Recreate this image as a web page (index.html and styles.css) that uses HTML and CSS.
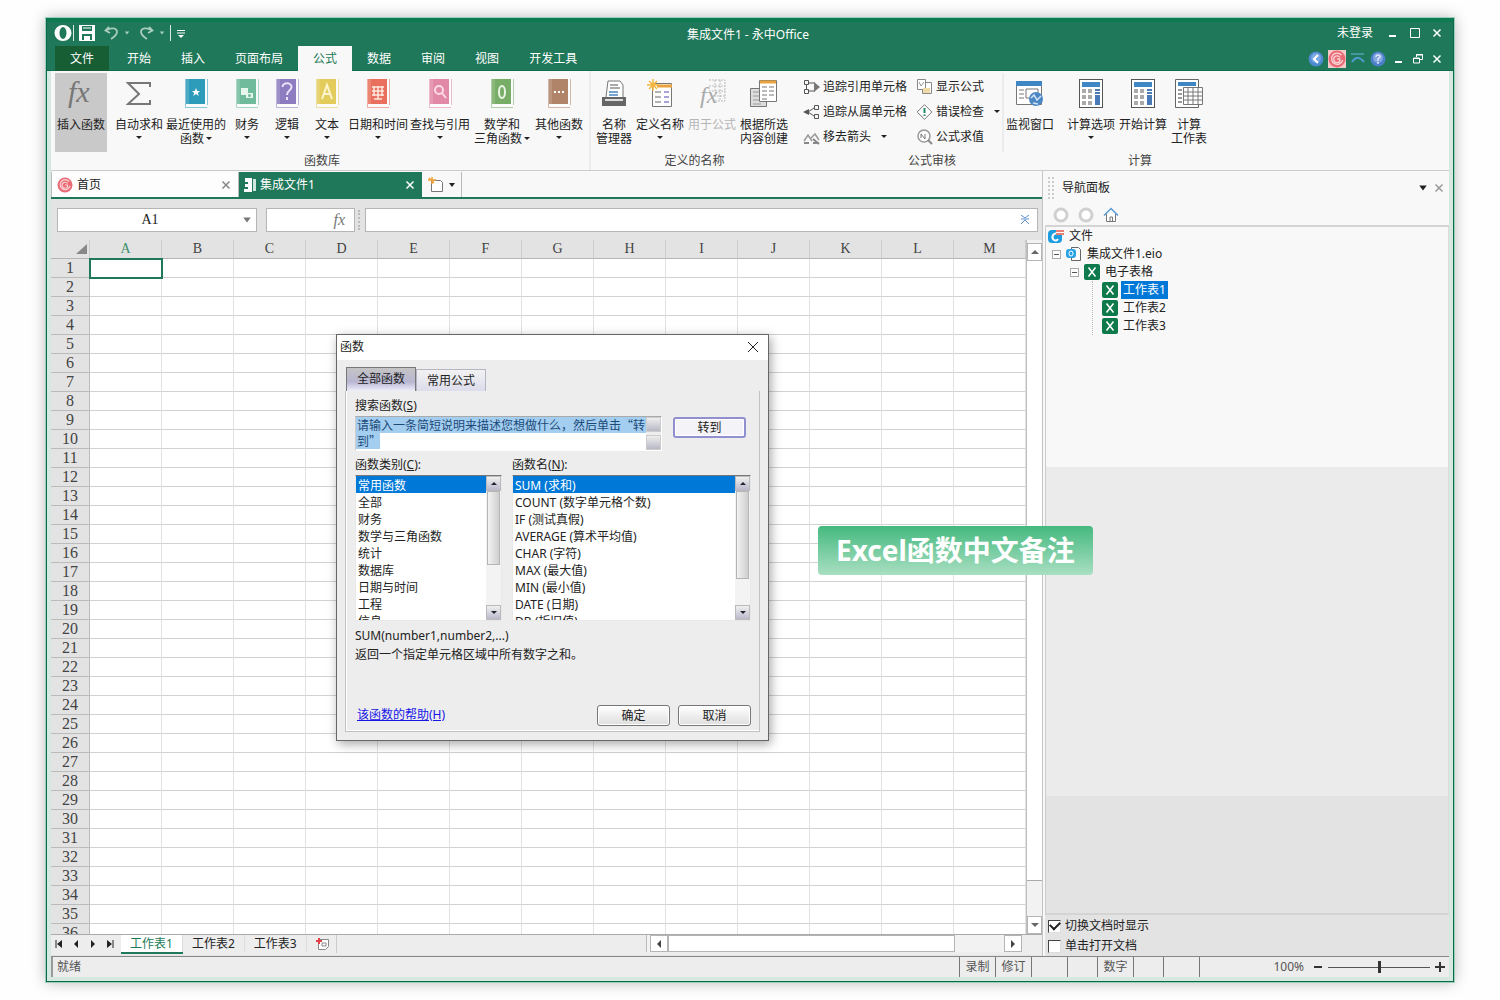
FILE: index.html
```html
<!DOCTYPE html>
<html lang="zh-CN">
<head>
    <meta charset="UTF-8">
    <meta name="viewport" content="width=device-width, initial-scale=1.0">
    <title>集成文件1 - 永中Office</title>
    <link rel="stylesheet" href="styles.css">
</head>
<body>
    <svg class="sprite" aria-hidden="true">
        <symbol id="book" viewBox="0 0 26 30">
            <rect x="3" y="0" width="19" height="25" fill="currentColor"/>
            <path d="M2.500 0v28.500H24M24.500 0v26" fill="none" stroke="currentColor" stroke-opacity=".55"/>
            <path d="M3 25.500h20v2H3z" fill="#fff"/>
            <path d="M23 0v27" stroke="#fff"/>
            <rect x="3" y="0" width="3" height="25" fill="#fff" opacity=".15"/>
        </symbol>
        <symbol id="cross" viewBox="0 0 10 10">
            <path d="M1.500 1.500l7 7M8.500 1.500l-7 7" fill="none" stroke="currentColor" stroke-width="1.500"/>
        </symbol>
        <symbol id="minus" viewBox="0 0 10 10"><path d="M1 8h7" stroke="currentColor" stroke-width="2"/></symbol>
        <symbol id="swirl" viewBox="0 0 16 16">
            <circle cx="8" cy="8" r="7.500" fill="#e96b75"/>
            <path d="M12 4.500A5 5 0 1 0 13 9M10.500 6.500A3 3 0 1 0 10.500 10V8H8" fill="none" stroke="#fbd5d8" stroke-width="1.200"/>
        </symbol>
        <symbol id="sheet" viewBox="0 0 16 16">
            <rect width="16" height="16" rx="2" fill="#0e7a4c"/>
            <path d="M4.500 3.500l7 9M11.500 3.500l-7 9" stroke="#fff" stroke-width="1.500"/>
        </symbol>
        <symbol id="calc" viewBox="0 0 26 30">
            <rect x="1.500" y=".5" width="23" height="28" fill="#fff" stroke="#555"/>
            <path d="M4 3h18v5H4z" fill="#3f87c4"/>
            <path d="M4 10h4v4H4zM10 10h4v4h-4zM4 16h4v4H4zM10 16h4v4h-4zM4 22h4v4H4zM10 22h4v4h-4z" fill="#aaa"/>
            <path d="M17 10h5v2h-5zM17 13h5v2h-5zM17 16h5v10h-5z" fill="#4a79b8"/>
        </symbol>
        <symbol id="chevron" viewBox="0 0 8 8"><path d="M1 2h6L4 6z" fill="currentColor"/></symbol>
    </svg>

    <div class="window">
        <header class="titlebar">
            <div class="titlebar__top">
                <div class="quick">
                    <svg width="18" height="16" viewBox="0 0 18 16"><path fill-rule="evenodd" fill="#fff" d="M9 0a8.500 8 0 1 0 0 16A8.500 8 0 1 0 9 0zM9 2a3.500 6 0 1 1 0 12A3.500 6 0 1 1 9 2z"/></svg>
                    <span class="quick__line"></span>
                    <button class="icon-button" aria-label="保存"><svg width="16" height="16" viewBox="0 0 16 16"><path fill="#fff" fill-rule="evenodd" d="M0 0h16v16H0zM3 1v5h10V1zM3 9v6h2v-4h6v4h2V9z"/><path d="M4 3h8M7 12v3" stroke="#fff"/></svg></button>
                    <button class="icon-button quick__undo" aria-label="撤销"><svg width="15" height="14" viewBox="0 0 15 14"><path d="M5 1L1.500 4.500 6 7M2 4.500C7 1 13 2 13 6c0 3-3 5-6 7" fill="none" stroke="#a9cdbd" stroke-width="1.800"/></svg></button>
                    <svg class="quick__arrow" width="6" height="6"><use href="#chevron"/></svg>
                    <button class="icon-button" aria-label="重做"><svg width="15" height="14" viewBox="0 0 15 14"><path d="M10 1l3.500 3.500L9 7M13 4.500C8 1 2 2 2 6c0 3 3 5 6 7" fill="none" stroke="#a9cdbd" stroke-width="1.800"/></svg></button>
                    <svg class="quick__arrow" width="6" height="6"><use href="#chevron"/></svg>
                    <span class="quick__line"></span>
                    <svg width="9" height="9" viewBox="0 0 9 9"><path d="M1 1.500h8M1 4h8" stroke="#fff"/><path d="M2 6h6L5 9z" fill="#fff"/></svg>
                </div>
                <h1 class="titlebar__name">集成文件1 - 永中Office</h1>
                <div class="controls">
                    <span class="controls__login">未登录</span>
                    <button class="icon-button" aria-label="最小化"><svg width="10" height="10"><use href="#minus"/></svg></button>
                    <button class="icon-button" aria-label="最大化"><svg width="12" height="12" viewBox="0 0 12 12"><path d="M1.500 1.500h9v9h-9z" fill="none" stroke="#fff"/></svg></button>
                    <button class="icon-button" aria-label="关闭"><svg width="10" height="10"><use href="#cross"/></svg></button>
                </div>
            </div>
            <div class="titlebar__bottom">
                <nav class="menu">
                    <a class="menu__item menu__item_file" href="#">文件</a>
                    <a class="menu__item" href="#">开始</a>
                    <a class="menu__item" href="#">插入</a>
                    <a class="menu__item" href="#">页面布局</a>
                    <a class="menu__item menu__item_active" href="#">公式</a>
                    <a class="menu__item" href="#">数据</a>
                    <a class="menu__item" href="#">审阅</a>
                    <a class="menu__item" href="#">视图</a>
                    <a class="menu__item" href="#">开发工具</a>
                </nav>
                <div class="controls controls_small">
                    <svg width="16" height="16" viewBox="0 0 16 16"><circle cx="8" cy="8" r="7.500" fill="#4d8ad0"/><circle cx="8" cy="7" r="5" fill="#79a8e2"/><path d="M10 4L6 8l4 4" fill="none" stroke="#fff" stroke-width="2"/></svg>
                    <span class="controls__home"><svg width="18" height="18"><use href="#swirl"/></svg></span>
                    <svg width="16" height="16" viewBox="0 0 16 16"><path d="M1 3h13" stroke="#4fa3b5" stroke-width="1.500"/><path d="M2 11c4-6 8-5 12 0" fill="none" stroke="#4f9bd0" stroke-width="2"/></svg>
                    <svg width="16" height="16" viewBox="0 0 16 16"><circle cx="8" cy="8" r="7.500" fill="#4d7fc8"/><circle cx="8" cy="7" r="5" fill="#83a6e0"/><path d="M6 6c0-3 5-2 4 0L8 8v2M8 11v2" fill="none" stroke="#dfe9fa" stroke-width="1.500"/></svg>
                    <button class="icon-button" aria-label="最小化文档"><svg width="10" height="10"><use href="#minus"/></svg></button>
                    <button class="icon-button" aria-label="还原文档"><svg width="12" height="12" viewBox="0 0 12 12"><path d="M4.500 4V1.500h6v5H8M1.500 5h6v5h-6zM1 5.500h7M4 2h7" fill="none" stroke="#fff"/></svg></button>
                    <button class="icon-button" aria-label="关闭文档"><svg width="10" height="10"><use href="#cross"/></svg></button>
                </div>
            </div>
        </header>

        <div class="ribbon">
            <section class="group group_library">
                <div class="group__tools">
                    <button class="tool tool_m tool_active">
                        <svg width="32" height="30" viewBox="0 0 32 30"><text x="3" y="23" class="fx-glyph">fx</text></svg>
                        <span class="tool__label">插入函数</span>
                    </button>
                    <button class="tool tool_m tool_gap">
                        <svg width="26" height="30" viewBox="0 0 26 30"><path d="M24 8V4H2l11 11L2 25h22v-4" fill="none" stroke="#777" stroke-width="2"/></svg>
                        <span class="tool__label">自动求和<i class="caret"></i></span>
                    </button>
                    <button class="tool tool_l">
                        <svg class="book_teal" width="26" height="30" viewBox="0 0 26 30"><use href="#book"/><path d="M13 9l1.200 3H17l-2.200 2 1 3-2.800-2-2.800 2 1-3L9 12h2.800z" fill="#fff"/></svg>
                        <span class="tool__label">最近使用的<br>函数<i class="caret caret_inline"></i></span>
                    </button>
                    <button class="tool tool_s">
                        <svg class="book_mint" width="26" height="30" viewBox="0 0 26 30"><use href="#book"/><path d="M7 9h7v7H7zM12 14h7v5h-7z" fill="#e6f6ee"/><circle cx="15.500" cy="16.500" r="1.500" fill="#6fbb9c"/></svg>
                        <span class="tool__label">财务<i class="caret"></i></span>
                    </button>
                    <button class="tool tool_s">
                        <svg class="book_violet" width="26" height="30" viewBox="0 0 26 30"><use href="#book"/><path d="M8.500 8c0-5 9-5 9 0 0 4-4.500 3-4.500 8M13 18v3" fill="none" stroke="#e9e2fa" stroke-width="2"/></svg>
                        <span class="tool__label">逻辑<i class="caret"></i></span>
                    </button>
                    <button class="tool tool_s">
                        <svg class="book_yellow" width="26" height="30" viewBox="0 0 26 30"><use href="#book"/><path d="M8 20l5-14 5 14M10 15h6" fill="none" stroke="#fdf5d0" stroke-width="2"/></svg>
                        <span class="tool__label">文本<i class="caret"></i></span>
                    </button>
                    <button class="tool tool_l">
                        <svg class="book_red" width="26" height="30" viewBox="0 0 26 30"><use href="#book"/><path d="M7 8h12M7 12h12M7 16h12M9 7v10M13 7v13M17 7v10M9 20h8" stroke="#fde8e0" stroke-width="1.500"/></svg>
                        <span class="tool__label">日期和时间<i class="caret"></i></span>
                    </button>
                    <button class="tool tool_l">
                        <svg class="book_pink" width="26" height="30" viewBox="0 0 26 30"><use href="#book"/><circle cx="12" cy="11" r="4" fill="none" stroke="#fbdbe7" stroke-width="2"/><path d="M15 14l4 5" stroke="#fbdbe7" stroke-width="2"/></svg>
                        <span class="tool__label">查找与引用<i class="caret"></i></span>
                    </button>
                    <button class="tool tool_l">
                        <svg class="book_green" width="26" height="30" viewBox="0 0 26 30"><use href="#book"/><ellipse cx="13" cy="13" rx="3" ry="6" fill="none" stroke="#eaf5e4" stroke-width="2"/></svg>
                        <span class="tool__label">数学和<br>三角函数<i class="caret caret_inline"></i></span>
                    </button>
                    <button class="tool tool_m">
                        <svg class="book_brown" width="26" height="30" viewBox="0 0 26 30"><use href="#book"/><path d="M8 12h2v2H8zM12 12h2v2h-2zM16 12h2v2h-2z" fill="#fff"/></svg>
                        <span class="tool__label">其他函数<i class="caret"></i></span>
                    </button>
                </div>
                <h2 class="group__name">函数库</h2>
            </section>

            <section class="group group_names">
                <div class="group__tools">
                    <button class="tool tool_s">
                        <svg width="26" height="30" viewBox="0 0 26 30"><path d="M5 18L7 2h12l3 4v13" fill="#fff" stroke="#777"/><path d="M9 6h8M9 9h10" stroke="#555"/><path d="M8 13h9M8 16h9" stroke="#4a86c5" stroke-width="1.500"/><path d="M1 18h24v9H1z" fill="#666"/><path d="M4 20h18v2H4z" fill="#ddd"/></svg>
                        <span class="tool__label">名称<br>管理器</span>
                    </button>
                    <button class="tool tool_m">
                        <svg width="26" height="30" viewBox="0 0 26 30"><path d="M5.500 4.500h19v23h-19z" fill="#fff" stroke="#777"/><path d="M10 7h15" stroke="#e8a33d" stroke-width="3"/><path d="M8 13h6M8 18h6M8 23h6" stroke="#666"/><path d="M17 13h5M17 18h5M17 23h5" stroke="#8a86c8" stroke-width="1.500"/><path d="M6 0v12M0 6h12M2 2l8 8M10 2l-8 8" stroke="#f4b63f" stroke-width="1.500"/></svg>
                        <span class="tool__label">定义名称<i class="caret"></i></span>
                    </button>
                    <button class="tool tool_m" disabled>
                        <svg width="30" height="30" viewBox="0 0 30 30"><path d="M12 1h16v21H16M12 7h16M12 12h16M17 17h11M18 1v12M23 1v21" fill="none" stroke="#bbb" stroke-dasharray="2 1"/><text x="3" y="24" class="fx-glyph fx-glyph_muted">fx</text></svg>
                        <span class="tool__label">用于公式</span>
                    </button>
                    <button class="tool tool_m">
                        <svg width="30" height="30" viewBox="0 0 30 30"><path d="M1.500 9.500h16v18h-16z" fill="#ddd" stroke="#777"/><path d="M4 13h11M4 17h11M4 21h11M4 25h8" stroke="#999"/><path d="M10.500 1.500h17v21h-17z" fill="#fff" stroke="#777"/><path d="M11 3h16" stroke="#e8a33d" stroke-width="3"/><path d="M13 8h5M13 12h5M13 16h5M13 20h5M20 8h5M20 12h5M20 16h5" stroke="#777"/></svg>
                        <span class="tool__label">根据所选<br>内容创建</span>
                    </button>
                </div>
                <h2 class="group__name">定义的名称</h2>
            </section>

            <section class="group group_audit">
                <div class="group__tools">
                    <div class="audit">
                        <button class="audit__tool"><svg width="18" height="16" viewBox="0 0 18 16"><path d="M1.500 1.500h4v4h-4zM1.500 10.500h4v4h-4zM6 4h6M6 12h6M3.500 6v4" fill="none" stroke="#555"/><path d="M11 3l6 5-6 5z" fill="#777"/></svg>追踪引用单元格</button>
                        <button class="audit__tool"><svg width="18" height="16" viewBox="0 0 18 16"><path d="M11.500 1.500h4v4h-4zM11.500 10.500h4v4h-4zM5 8l6-4M5 8l6 4" fill="none" stroke="#555"/><path d="M0 8l6-3v6z" fill="#555"/></svg>追踪从属单元格</button>
                        <button class="audit__tool"><svg width="18" height="16" viewBox="0 0 18 16"><path d="M1 12l4-6 4 6M8 9l4-4 4 6" fill="none" stroke="#999" stroke-width="1.500"/><path d="M1 14h5M10 14h6M10 10l6 5" stroke="#888" stroke-width="2"/></svg>移去箭头<i class="caret caret_side"></i></button>
                    </div>
                    <div class="audit audit_second">
                        <button class="audit__tool"><svg width="18" height="16" viewBox="0 0 18 16"><path d="M1.500.5h8v10h-8zM9.500 3.500h6v11h-9v-4" fill="#fff" stroke="#888"/><path d="M3 3l2 4 3-4" fill="none" stroke="#999"/><path d="M7 9h7v5H7z" fill="#f1d9a5"/></svg>显示公式</button>
                        <button class="audit__tool"><svg width="18" height="16" viewBox="0 0 18 16"><path d="M8.500.7l7.300 7.300-7.300 7.300L1.200 8z" fill="#fff" stroke="#777"/><path d="M8.500 4v5M8.500 10.500V12" stroke="#1f8a64" stroke-width="2"/></svg>错误检查<i class="caret caret_side"></i></button>
                        <button class="audit__tool"><svg width="18" height="16" viewBox="0 0 18 16"><circle cx="8" cy="7" r="6" fill="#fff" stroke="#999" stroke-width="1.500"/><path d="M12 11l4 4" stroke="#888" stroke-width="2"/><path d="M5 9V5l4 5V5" fill="none" stroke="#777"/></svg>公式求值</button>
                    </div>
                    <button class="tool tool_m">
                        <svg width="30" height="30" viewBox="0 0 30 30"><path d="M1.500 3.500h25v22h-25z" fill="#fff" stroke="#777"/><path d="M1 2h26v5H1z" fill="#3f87c4"/><path d="M4 11h5M4 15h5M4 19h5M11 10h12v9H11z" fill="none" stroke="#777"/><circle cx="21" cy="20" r="7" fill="#4b87c4"/><path d="M16 19l3-3 3 5 4-4M18 24l5 1" fill="none" stroke="#cfe2f4" stroke-width="1.500"/></svg>
                        <span class="tool__label">监视窗口</span>
                    </button>
                </div>
                <h2 class="group__name">公式审核</h2>
            </section>

            <section class="group group_calc">
                <div class="group__tools">
                    <button class="tool tool_m">
                        <svg width="26" height="30"><use href="#calc"/></svg>
                        <span class="tool__label">计算选项<i class="caret"></i></span>
                    </button>
                    <button class="tool tool_m">
                        <svg width="26" height="30"><use href="#calc"/></svg>
                        <span class="tool__label">开始计算</span>
                    </button>
                    <button class="tool tool_s">
                        <svg width="30" height="30" viewBox="0 0 30 30"><path d="M1.500.5h23v28h-23z" fill="#fff" stroke="#666"/><path d="M4 3h18v4H4z" fill="#3f87c4"/><path d="M4 11h4M4 15h4M4 19h4M4 23h4" stroke="#999" stroke-width="2"/><path d="M9.500 8.500h19v17h-19zM9 13h19M9 17h19M9 21h19M14 9v16M19 9v16M24 9v16" fill="#fff" stroke="#777"/></svg>
                        <span class="tool__label">计算<br>工作表</span>
                    </button>
                </div>
                <h2 class="group__name">计算</h2>
            </section>
        </div>

        <main class="main">
            <div class="editor">
                <div class="docs">
                    <div class="docs__tab">
                        <svg width="16" height="16"><use href="#swirl"/></svg>
                        <span>首页</span>
                        <button class="icon-button docs__close" aria-label="关闭首页"><svg width="10" height="10"><use href="#cross"/></svg></button>
                    </div>
                    <div class="docs__tab docs__tab_active">
                        <svg width="12" height="14" viewBox="0 0 12 14"><path d="M1 0h7v14H0v-3h4V9H1V6h3V4H1z" fill="#fff"/><path d="M9 1h3v12H9z" fill="#cfe6dc"/></svg>
                        <span>集成文件1</span>
                        <button class="icon-button docs__close" aria-label="关闭集成文件1"><svg width="10" height="10"><use href="#cross"/></svg></button>
                    </div>
                    <button class="docs__new" aria-label="新建">
                        <svg width="16" height="16" viewBox="0 0 16 16"><path d="M3.500 3.500h9l2 2v9h-11z" fill="#fff" stroke="#777"/><path d="M0 3h8M4 0v7M1 1l5 5" stroke="#f0a23a" stroke-width="1.500"/></svg>
                        <svg width="8" height="8"><use href="#chevron"/></svg>
                    </button>
                </div>

                <div class="formula">
                    <div class="formula__box formula__box_name">
                        <input class="formula__input formula__input_name" type="text" value="A1" aria-label="名称框">
                        <svg width="10" height="10"><use href="#chevron"/></svg>
                    </div>
                    <div class="formula__box formula__box_fx"><span class="formula__fx">fx</span></div>
                    <span class="formula__grip"></span>
                    <div class="formula__box formula__box_text">
                        <input class="formula__input" type="text" aria-label="编辑栏">
                        <svg width="10" height="10" viewBox="0 0 10 10"><path d="M1 0l4 3 4-3M1 4h8M1 9l4-4 4 4" fill="none" stroke="#5d8fd0"/></svg>
                    </div>
                </div>

                <div class="grid">
                    <div class="grid__view">
                        <table class="cells">
                            <thead><tr class="cells__head"><th class="cells__corner"><svg width="11" height="10" viewBox="0 0 11 10"><path d="M11 0v10H0z" fill="#888"/></svg></th></tr></thead>
                            <tbody class="cells__body"></tbody>
                        </table>
                    </div>
                    <div class="vscroll">
                        <button class="scroll-button" aria-label="向上"><svg width="8" height="8" viewBox="0 0 8 8"><path d="M0 6h8L4 2z" fill="#666"/></svg></button>
                        <div class="vscroll__thumb"></div>
                        <button class="scroll-button" aria-label="向下"><svg width="8" height="8" viewBox="0 0 8 8"><path d="M0 2h8L4 6z" fill="#666"/></svg></button>
                    </div>
                </div>

                <div class="sheets">
                    <div class="sheets__nav">
                        <button class="icon-button" aria-label="第一张"><svg width="8" height="8" viewBox="0 0 8 8"><path d="M1 0v8" stroke="#222"/><path d="M7 0v8L2 4z" fill="#222"/></svg></button>
                        <button class="icon-button" aria-label="上一张"><svg width="8" height="8" viewBox="0 0 8 8"><path d="M6 0v8L2 4z" fill="#222"/></svg></button>
                        <button class="icon-button" aria-label="下一张"><svg width="8" height="8" viewBox="0 0 8 8"><path d="M2 0v8l4-4z" fill="#222"/></svg></button>
                        <button class="icon-button" aria-label="最后一张"><svg width="8" height="8" viewBox="0 0 8 8"><path d="M7 0v8" stroke="#222"/><path d="M1 0v8l5-4z" fill="#222"/></svg></button>
                    </div>
                    <button class="sheets__tab sheets__tab_active">工作表1</button>
                    <button class="sheets__tab">工作表2</button>
                    <button class="sheets__tab">工作表3</button>
                    <button class="sheets__add" aria-label="插入工作表"><svg width="14" height="13" viewBox="0 0 14 13"><path d="M2.500 1.500h10v7l-3 3h-7zM6 5h4v3H6z" fill="#fff" stroke="#888"/><path d="M0 3h6M3 0v6" stroke="#e5404a" stroke-width="2"/></svg></button>
                    <div class="hscroll">
                        <button class="scroll-button" aria-label="向左"><svg width="8" height="8" viewBox="0 0 8 8"><path d="M6 0v8L2 4z" fill="#444"/></svg></button>
                        <div class="hscroll__thumb"></div>
                        <button class="scroll-button" aria-label="向右"><svg width="8" height="8" viewBox="0 0 8 8"><path d="M2 0v8l4-4z" fill="#444"/></svg></button>
                    </div>
                </div>
            </div>

            <aside class="panel">
                <div class="panel__title">
                    <span class="panel__grip"></span>
                    <h2 class="panel__name">导航面板</h2>
                    <svg class="panel__menu" width="10" height="10"><use href="#chevron"/></svg>
                    <button class="icon-button panel__close" aria-label="关闭面板"><svg width="10" height="10"><use href="#cross"/></svg></button>
                </div>
                <div class="panel__bar">
                    <svg width="16" height="16" viewBox="0 0 16 16"><circle cx="8" cy="8" r="6" fill="#fff" stroke="#d0d0d0" stroke-width="3"/></svg>
                    <svg width="16" height="16" viewBox="0 0 16 16"><circle cx="8" cy="8" r="6" fill="#fff" stroke="#d0d0d0" stroke-width="3"/></svg>
                    <svg width="16" height="16" viewBox="0 0 16 16"><path d="M3.500 7v7.500h9V7M7 14v-4h2.500v4" fill="#fff" stroke="#777"/><path d="M1 8.500l7-7 7 7" fill="none" stroke="#5b9bd5" stroke-width="1.500"/></svg>
                </div>
                <div class="tree">
                    <div class="tree__row">
                        <svg width="18" height="16" viewBox="0 0 18 16"><rect x="2" y="2" width="14" height="13" rx="4" fill="#1d9ce0"/><path d="M11 6a3 3.500 0 1 0 1 5" fill="none" stroke="#fff" stroke-width="2"/><path d="M10 2h8v5h-8z" fill="#fff"/><path d="M10 3h8M10 6h8" stroke="#e2574c" stroke-width="1.500"/></svg>
                        <span class="tree__text">文件</span>
                    </div>
                    <div class="tree__row tree__row_file">
                        <span class="tree__toggle"></span>
                        <svg width="16" height="16" viewBox="0 0 16 16"><path d="M5.500 1.500h7l2 2v11h-9z" fill="#fff" stroke="#666"/><rect x="0" y="3" width="10" height="9" rx="3" fill="#29a3e6"/><ellipse cx="5" cy="7.500" rx="2" ry="2.500" fill="none" stroke="#fff"/></svg>
                        <span class="tree__text">集成文件1.eio</span>
                    </div>
                    <div class="tree__row tree__row_book">
                        <span class="tree__toggle"></span>
                        <svg width="16" height="16"><use href="#sheet"/></svg>
                        <span class="tree__text">电子表格</span>
                    </div>
                    <div class="tree__leaves">
                        <div class="tree__row"><svg width="16" height="16"><use href="#sheet"/></svg><span class="tree__text tree__text_selected">工作表1</span></div>
                        <div class="tree__row"><svg width="16" height="16"><use href="#sheet"/></svg><span class="tree__text">工作表2</span></div>
                        <div class="tree__row"><svg width="16" height="16"><use href="#sheet"/></svg><span class="tree__text">工作表3</span></div>
                    </div>
                </div>
                <div class="panel__options">
                    <label class="check"><input class="check__box" type="checkbox" checked>切换文档时显示</label>
                    <label class="check"><input class="check__box" type="checkbox">单击打开文档</label>
                </div>
            </aside>

            <form class="dialog" role="dialog" aria-labelledby="dialog-title" onsubmit="return false;">
                <div class="dialog__head">
                    <h2 class="dialog__title" id="dialog-title">函数</h2>
                    <button type="button" class="icon-button" aria-label="关闭对话框"><svg width="12" height="12" viewBox="0 0 12 12"><path d="M1 1l10 10M11 1L1 11" stroke="#222"/></svg></button>
                </div>
                <div class="dialog__tabs">
                    <button type="button" class="dialog__tab dialog__tab_active">全部函数</button>
                    <button type="button" class="dialog__tab">常用公式</button>
                </div>
                <div class="dialog__page">
                    <label class="dialog__label" for="search">搜索函数(<u>S</u>)</label>
                    <div class="search">
                        <div class="search__box">
                            <textarea class="search__text" id="search">请输入一条简短说明来描述您想做什么，然后单击“转到”</textarea>
                            <div class="search__scroll"><span></span><span></span></div>
                        </div>
                        <button type="button" class="push push_default">转到</button>
                    </div>
                    <div class="lists">
                        <div class="lists__column">
                            <label class="dialog__label" for="kind">函数类别(<u>C</u>):</label>
                            <div class="listbox">
                                <select class="listbox__items" id="kind" size="8">
                                    <option selected>常用函数</option>
                                    <option>全部</option>
                                    <option>财务</option>
                                    <option>数学与三角函数</option>
                                    <option>统计</option>
                                    <option>数据库</option>
                                    <option>日期与时间</option>
                                    <option>工程</option>
                                    <option>信息</option>
                                </select>
                                <div class="listbox__scroll">
                                    <i class="listbox__arrow listbox__arrow_up"></i>
                                    <i class="listbox__thumb"></i>
                                    <i class="listbox__arrow"></i>
                                </div>
                            </div>
                        </div>
                        <div class="lists__column">
                            <label class="dialog__label" for="name">函数名(<u>N</u>):</label>
                            <div class="listbox">
                                <select class="listbox__items" id="name" size="8">
                                    <option selected>SUM (求和)</option>
                                    <option>COUNT (数字单元格个数)</option>
                                    <option>IF (测试真假)</option>
                                    <option>AVERAGE (算术平均值)</option>
                                    <option>CHAR (字符)</option>
                                    <option>MAX (最大值)</option>
                                    <option>MIN (最小值)</option>
                                    <option>DATE (日期)</option>
                                    <option>DB (折旧值)</option>
                                </select>
                                <div class="listbox__scroll">
                                    <i class="listbox__arrow listbox__arrow_up"></i>
                                    <i class="listbox__thumb listbox__thumb_long"></i>
                                    <i class="listbox__arrow"></i>
                                </div>
                            </div>
                        </div>
                    </div>
                    <p class="dialog__hint">SUM(number1,number2,...)</p>
                    <p class="dialog__hint">返回一个指定单元格区域中所有数字之和。</p>
                    <div class="dialog__footer">
                        <a class="dialog__help" href="#">该函数的帮助(H)</a>
                        <button type="button" class="push">确定</button>
                        <button type="button" class="push">取消</button>
                    </div>
                </div>
            </form>

            <div class="caption">Excel函数中文备注</div>
        </main>

        <footer class="status">
            <span class="status__ready">就绪</span>
            <span class="status__cell">录制</span>
            <span class="status__cell">修订</span>
            <span class="status__cell"></span>
            <span class="status__cell status__cell_narrow"></span>
            <span class="status__cell">数字</span>
            <span class="status__cell status__cell_narrow"></span>
            <span class="status__cell"></span>
            <div class="zoom">
                <span class="zoom__value">100%</span>
                <button class="icon-button" aria-label="缩小"><svg width="10" height="10" viewBox="0 0 10 10"><path d="M1 5h8" stroke="#333" stroke-width="2"/></svg></button>
                <input class="zoom__range" type="range" min="0" max="200" value="100" aria-label="显示比例">
                <button class="icon-button" aria-label="放大"><svg width="10" height="10" viewBox="0 0 10 10"><path d="M0 5h10M5 0v10" stroke="#333" stroke-width="2"/></svg></button>
            </div>
        </footer>
    </div>

    <script>
        const cellWidth = 72;
        const cellHeight = 19;
        const numberWidth = 39;

        const view = document.querySelector(".grid__view");
        const head = document.querySelector(".cells__head");
        const body = document.querySelector(".cells__body");

        // only as many rows and columns as the view can show
        const columnCount = Math.min(26, Math.ceil((view.clientWidth - numberWidth) / cellWidth));
        const rowCount = Math.ceil(view.clientHeight / cellHeight) - 1;

        for (let i = 0; i < columnCount; i++) {
            const th = document.createElement("th");
            th.textContent = String.fromCharCode(65 + i);
            th.className = i === 0 ? "cells__column cells__column_current" : "cells__column";
            head.append(th);
        }

        for (let i = 1; i <= rowCount; i++) {
            const row = body.insertRow();
            const th = document.createElement("th");
            th.textContent = i;
            th.className = "cells__number";
            row.append(th);
            for (let j = 0; j < columnCount; j++) {
                row.insertCell().className = "cells__cell";
            }
        }

        body.querySelector(".cells__cell").classList.add("cells__cell_selected");
    </script>
</body>
</html>
```
FILE: styles.css
```css
* {
    box-sizing: border-box;
    margin: 0;
    padding: 0;
}

body {
    height: 100vh;
    padding: 18px 46px;
    overflow: hidden;
    background-color: #fefefe;
    color: #222;
    font: 12px/16px "Noto Sans", "Noto Sans CJK SC", sans-serif;
}

button,
input,
select,
textarea {
    border: none;
    border-radius: 0;
    background: none;
    color: inherit;
    font: inherit;
}

h1,
h2 {
    font-size: 12px;
    font-weight: normal;
}

svg {
    flex: none;
    display: block;
}

.sprite {
    position: absolute;
    width: 0;
    height: 0;
}

.window {
    display: flex;
    flex-direction: column;
    height: 100%;
    border: 1px solid #0b6b48;
    border-top: none;
    outline: 1px solid #9ccfbb;
    box-shadow: 0 0 14px rgba(0, 0, 0, 0.3);
    background-color: #d5e9e1;
}

.icon-button {
    display: flex;
    align-items: center;
    justify-content: center;
}

/* title */

.titlebar {
    flex: none;
    height: 53px;
    border-top: 4px solid #0d7b52;
    border-bottom: 1px solid #0d6e49;
    background-color: #1f7859;
    color: #fff;
}

.titlebar__top {
    display: grid;
    grid-template-columns: 1fr auto 1fr;
    height: 24px;
    padding: 0 11px 0 7px;
}

.titlebar__name {
    line-height: 25px;
}

.quick {
    display: flex;
    align-items: center;
    gap: 5px;
    height: 22px;
}

.quick__line {
    width: 1px;
    height: 16px;
    margin-left: -4px;
    background-color: #d8ebe3;
}

.quick__undo {
    margin-left: 4px;
}

.quick__arrow {
    margin-right: 4px;
    color: #a9cdbd;
}

.controls {
    display: flex;
    align-items: center;
    justify-content: flex-end;
    gap: 11px;
    height: 22px;
}

.controls__login {
    margin-right: 4px;
}

.controls_small {
    gap: 4px;
    height: 25px;
    padding-right: 11px;
}

.controls_small .icon-button {
    margin-left: 4px;
}

.controls__home {
    background-color: #f5c9c9;
}

.titlebar__bottom {
    display: flex;
    justify-content: space-between;
    height: 24px;
}

.menu {
    display: flex;
    padding-left: 8px;
}

.menu__item {
    height: 25px;
    padding: 0 15px;
    color: #fff;
    line-height: 26px;
    text-decoration: none;
}

.menu__item_file {
    margin-right: 3px;
    background-color: #175e35;
}

.menu__item_active {
    background-color: #f8f8f8;
    color: #217a55;
}

/* ribbon */

.ribbon {
    flex: none;
    display: flex;
    height: 100px;
    margin: 0 4px;
    border-bottom: 1px solid #ccc;
    background-color: #f8f8f8;
}

.group {
    display: flex;
    flex-direction: column;
    padding-top: 2px;
}

.group_library {
    width: 540px;
    padding-left: 4px;
    border-right: 2px solid #ececec;
}

.group_names {
    width: 204px;
    padding-left: 3px;
}

.group_audit {
    width: 266px;
    padding-left: 8px;
}

.group_calc {
    width: 154px;
    padding-left: 4px;
}

.group__tools {
    display: flex;
    height: 79px;
}

.group__name {
    margin-top: 1px;
    color: #444;
    text-align: center;
}

.tool {
    flex: none;
    display: flex;
    flex-direction: column;
    align-items: center;
    padding-top: 6px;
    line-height: 14px;
    text-align: center;
    white-space: nowrap;
}

.tool_s {
    width: 40px;
}

.tool_m {
    width: 52px;
}

.tool_l {
    width: 62px;
}

.tool_gap {
    margin-left: 6px;
}

.tool_active {
    background-color: #c9c9c9;
}

.tool:disabled {
    color: #b5b5b5;
}

.tool__label {
    margin-top: 9px;
}

.caret {
    display: block;
    width: 0;
    margin: 4px auto 0;
    border: 3px solid transparent;
    border-top-color: #222;
    border-bottom: none;
}

.caret_inline {
    display: inline-block;
    margin: 0 0 3px 2px;
}

.caret_side {
    display: inline-block;
    margin: 0 0 0 8px;
}

.book_teal { color: #2d9cba; }
.book_mint { color: #6fbb9c; }
.book_violet { color: #8d7cc0; }
.book_yellow { color: #e3cc5c; }
.book_red { color: #e8705c; }
.book_pink { color: #e289a8; }
.book_green { color: #77ad66; }
.book_brown { color: #b08468; }

.fx-glyph {
    fill: #777;
    font: italic 30px "Liberation Serif", serif;
}

.fx-glyph_muted {
    fill: #aaa;
    font-size: 24px;
}

.audit {
    display: flex;
    flex-direction: column;
    width: 113px;
    padding-top: 1px;
}

.audit_second {
    width: 88px;
    border-right: 2px solid #ececec;
}

.audit__tool {
    display: flex;
    align-items: center;
    gap: 2px;
    height: 25px;
    white-space: nowrap;
}

/* editor */

.main {
    position: relative;
    flex: 1;
    min-height: 0;
    display: flex;
    margin: 0 4px;
    background-color: #f8f8f8;
}

.editor {
    flex: 1;
    min-width: 0;
    display: flex;
    flex-direction: column;
    border-right: 1px solid #c4c4c4;
    background-color: #e3e3e3;
}

.docs {
    flex: none;
    display: flex;
    height: 28px;
    padding-top: 1px;
    border-bottom: 2px solid #1f7859;
    background-color: #f8f8f8;
}

.docs__tab {
    display: flex;
    align-items: center;
    gap: 4px;
    width: 187px;
    padding: 0 7px 0 5px;
    border-left: 1px solid #bbb;
    background-color: #fdfdfd;
}

.docs__tab_active {
    width: 184px;
    background-color: #1f7859;
    color: #fff;
}

.docs__close {
    margin-left: auto;
    color: #888;
}

.docs__tab_active .docs__close {
    color: #fff;
}

.docs__new {
    display: flex;
    align-items: center;
    gap: 4px;
    width: 40px;
    padding-left: 6px;
    border-right: 1px solid #bbb;
}

.formula {
    flex: none;
    display: flex;
    height: 41px;
    padding: 9px 4px 8px 6px;
}

.formula__box {
    display: flex;
    align-items: center;
    padding-right: 4px;
    border: 1px solid #b5b5b5;
    background-color: #fff;
    color: #777;
}

.formula__box_name {
    width: 200px;
    margin-right: 9px;
}

.formula__box_fx {
    justify-content: flex-end;
    width: 89px;
    padding-right: 9px;
}

.formula__box_text {
    flex: 1;
    padding-right: 7px;
}

.formula__fx {
    font: italic 16px "Liberation Serif", serif;
}

.formula__grip {
    width: 4px;
    margin: 2px 3px;
    border-left: 2px dotted #bbb;
}

.formula__input {
    flex: 1;
    min-width: 0;
    color: #222;
    outline: none;
}

.formula__input_name {
    font: 14px "Liberation Serif", serif;
    text-align: center;
}

.grid {
    flex: 1;
    min-height: 0;
    display: flex;
}

.grid__view {
    flex: 1;
    min-width: 0;
    overflow: hidden;
    background-color: #fff;
}

.cells {
    table-layout: fixed;
    width: 0;
    border-spacing: 0;
    color: #444;
    font: 16px/18px "Liberation Serif", serif;
}

.cells th {
    font-weight: normal;
}

.cells__corner,
.cells__column {
    width: 72px;
    height: 19px;
    border-right: 1px solid #ccc;
    border-bottom: 1px solid #b5b5b5;
    background-color: #e3e3e3;
    font-size: 14px;
}

.cells__corner {
    width: 39px;
}

.cells__corner svg {
    margin-left: 25px;
}

.cells__column_current {
    color: #3b8f6c;
}

.cells__number {
    height: 19px;
    border-right: 1px solid #bbb;
    border-bottom: 1px solid #bbb;
    background-color: #e3e3e3;
}

.cells__cell {
    border-right: 1px solid #e2e2e2;
    border-bottom: 1px solid #d2d2d2;
}

.cells__cell_selected {
    outline: 2px solid #1f7859;
    outline-offset: -1px;
}

.scroll-button {
    display: flex;
    align-items: center;
    justify-content: center;
    border: 1px solid #b5b5b5;
    background-color: #fff;
}

.vscroll {
    display: flex;
    flex-direction: column;
    width: 16px;
    padding-top: 3px;
    border-left: 1px solid #c0c0c0;
    background-color: #f2f2f2;
}

.vscroll .scroll-button {
    height: 18px;
}

.vscroll__thumb {
    flex: 1;
    margin-bottom: 35px;
    border-bottom: 1px solid #aaa;
    background-color: #fff;
}

.sheets {
    flex: none;
    display: flex;
    height: 21px;
    margin-bottom: 1px;
    border-top: 1px solid #aaa;
    background-color: #ededed;
}

.sheets__nav {
    display: flex;
    align-items: center;
    gap: 9px;
    width: 70px;
    height: 18px;
    padding-left: 4px;
}

.sheets__tab {
    height: 17px;
    padding: 0 9px;
    border-right: 1px solid #ddd;
    white-space: nowrap;
}

.sheets__tab_active {
    box-shadow: 0 2px #1f7859;
    background-color: #fff;
    color: #217a55;
}

.sheets__add {
    display: flex;
    align-items: center;
    width: 30px;
    height: 18px;
    padding-left: 9px;
    border-right: 1px solid #ccc;
}

.hscroll {
    display: flex;
    width: 376px;
    height: 17px;
    margin: 0 20px 0 auto;
    padding-left: 3px;
    border-left: 1px solid #bbb;
    background-color: #f2f2f2;
}

.hscroll .scroll-button {
    width: 18px;
}

.hscroll__thumb {
    flex: 1;
    margin-right: 49px;
    border: 1px solid #b5b5b5;
    background-color: #fff;
}

/* navigation panel */

.panel {
    display: flex;
    flex-direction: column;
    width: 406px;
    padding-left: 2px;
}

.panel__title {
    display: flex;
    align-items: center;
    height: 32px;
    padding: 2px 5px 0 3px;
}

.panel__grip {
    width: 6px;
    height: 22px;
    margin-right: 8px;
    border-left: 2px dotted #ccc;
    border-right: 2px dotted #ccc;
}

.panel__menu {
    margin-left: auto;
}

.panel__close {
    margin-left: 6px;
    color: #999;
}

.panel__bar {
    display: flex;
    align-items: center;
    gap: 9px;
    height: 24px;
    padding: 2px 0 0 8px;
    border-bottom: 2px solid #d4d4d4;
}

.tree {
    flex: 1;
    border-left: 1px solid #ccc;
    border-bottom: 2px solid #d4d4d4;
    border-right: 1px solid #ddd;
    background: linear-gradient(#f8f8f8 35%, #ebebeb 35%, #ebebeb 83%, #e3e3e3 83%);
}

.tree__row {
    display: flex;
    align-items: center;
    gap: 3px;
    height: 18px;
}

.tree__text {
    padding: 0 2px;
    line-height: 18px;
}

.tree__text_selected {
    background-color: #0078d7;
    color: #fff;
}

.tree__row_file {
    padding-left: 6px;
}

.tree__row_book {
    padding-left: 24px;
}

.tree__leaves {
    margin-left: 46px;
    padding-left: 9px;
    border-left: 1px dotted #bbb;
}

.tree__toggle {
    display: flex;
    align-items: center;
    width: 9px;
    height: 9px;
    margin-right: 2px;
    padding: 0 1px;
    border: 1px solid #aaa;
    background-color: #fff;
}

.tree__toggle::before {
    content: "";
    width: 100%;
    height: 1px;
    background-color: #555;
}

.panel__options {
    height: 41px;
    padding-top: 1px;
    background-color: #e3e3e3;
}

.check {
    display: flex;
    align-items: center;
    gap: 4px;
    height: 20px;
    padding-left: 3px;
}

.check__box {
    appearance: none;
    display: flex;
    align-items: center;
    justify-content: center;
    width: 13px;
    height: 13px;
    border: 1px solid #ddd;
    border-top-color: #444;
    border-left-color: #444;
    background-color: #fff;
}

.check__box:checked::before {
    content: "";
    width: 8px;
    height: 5px;
    margin-top: -3px;
    border-left: 2px solid #222;
    border-bottom: 2px solid #222;
    transform: rotate(-45deg);
}

/* function dialog */

.dialog {
    position: absolute;
    top: 163px;
    left: 285px;
    width: 433px;
    padding-bottom: 8px;
    border: 1px solid #666;
    background-color: #ededed;
    box-shadow: 2px 3px 10px rgba(0, 0, 0, 0.35);
}

.dialog__head {
    display: flex;
    align-items: center;
    justify-content: space-between;
    height: 25px;
    padding: 0 9px 2px 3px;
    background-color: #fff;
}

.dialog__tabs {
    display: flex;
    align-items: flex-end;
    height: 31px;
    padding-left: 9px;
}

.dialog__tab {
    width: 70px;
    height: 22px;
    border: 1px solid #b5b5c4;
    border-bottom: none;
    background: linear-gradient(#f2f2f2, #dcdcec);
    line-height: 18px;
}

.dialog__tab_active {
    height: 24px;
    padding-bottom: 2px;
    border-color: #777;
    background: linear-gradient(#c4c4c4, #b8b6d2 60%, #eeeefa);
}

.dialog__page {
    margin: 0 8px;
    padding: 5px 8px 4px 9px;
    border: 1px solid #c2c2c2;
    border-top: none;
    box-shadow: inset 1px -1px #fff;
}

.dialog__label {
    display: block;
    height: 20px;
    line-height: 20px;
}

.search {
    display: flex;
    align-items: flex-start;
    gap: 11px;
}

.search__box {
    display: flex;
    width: 307px;
    height: 35px;
    border: 1px solid #fff;
    border-top-color: #aaa;
    border-left-color: #ccc;
    background-color: #fff;
}

.search__text {
    width: 290px;
    height: 33px;
    padding-left: 1px;
    overflow: hidden;
    resize: none;
    outline: none;
    /* marked text: full first line, two characters of the second */
    background:
        linear-gradient(#a3cef0, #a3cef0) 0 0 / 290px 16px no-repeat,
        linear-gradient(#a3cef0, #a3cef0) 0 16px / 24px 16px no-repeat;
    color: #1c4a78;
    font-family: "Noto Sans CJK SC", sans-serif;
}

.search__scroll {
    display: flex;
    flex-direction: column;
    justify-content: space-between;
    width: 15px;
    background-color: #eee;
}

.search__scroll span {
    height: 15px;
    border: 1px solid #ccc;
    background: linear-gradient(#eee, #b8b8c6);
}

.push {
    width: 73px;
    height: 21px;
    border: 1px solid #777;
    border-radius: 3px;
    background: linear-gradient(#fff, #dedede);
    box-shadow: inset 0 0 0 1px #fff;
}

.push_default {
    margin-top: 1px;
    border: 2px solid #9090d0;
    background: #f4f4f8;
}

.lists {
    display: flex;
    gap: 10px;
    padding-top: 4px;
}

.lists__column:last-child {
    flex: 1;
}

.lists__column:first-child {
    width: 147px;
}

.listbox {
    display: flex;
    height: 146px;
    border: 1px solid #e8e8e8;
    border-top-color: #777;
    background-color: #fff;
}

.listbox__items {
    flex: 1;
    min-width: 0;
    height: 144px;
    overflow: hidden;
    outline: none;
    scrollbar-width: none;
}

.listbox__items option {
    height: 17px;
    min-height: 17px;
    padding: 0 2px;
    line-height: 17px;
}

.listbox__items option:checked {
    background: linear-gradient(#0078d7, #0078d7);
    color: #fff;
}

.listbox__scroll {
    display: flex;
    flex-direction: column;
    justify-content: space-between;
    width: 15px;
    background-color: #f3f3f3;
}

.listbox__arrow {
    display: flex;
    align-items: center;
    justify-content: center;
    height: 15px;
    border: 1px solid #bbb;
    background: linear-gradient(#f0f0f0, #b9b9cc);
}

.listbox__arrow::before {
    content: "";
    border: 3px solid transparent;
    border-top-color: #223;
    border-bottom: none;
}

.listbox__arrow_up::before {
    transform: rotate(180deg);
}

.listbox__thumb {
    flex: 1;
    margin: 0 1px 40px;
    border: 1px solid #b5b5b5;
    background: linear-gradient(90deg, #f2f2f2, #cfcfcf);
}

.listbox__thumb_long {
    margin-bottom: 26px;
}

.dialog__hint {
    padding-top: 3px;
}

.dialog__hint:first-of-type {
    padding-top: 7px;
}

.dialog__footer {
    display: flex;
    align-items: center;
    gap: 8px;
    padding: 42px 0 1px;
}

.dialog__help {
    margin-right: auto;
    padding: 0 0 2px 2px;
    color: #1616e8;
}

/* caption over the workspace */

.caption {
    position: absolute;
    top: 355px;
    left: 767px;
    padding: 0 18px;
    border-radius: 4px;
    background: linear-gradient(#45b97f, #a9dfc2);
    color: #fff;
    font-size: 28px;
    font-weight: bold;
    line-height: 49px;
    white-space: nowrap;
}

/* status bar */

.status {
    flex: none;
    display: flex;
    height: 21px;
    margin: 0 4px 4px;
    border-top: 1px solid #888;
    background-color: #ededed;
    color: #555;
    line-height: 20px;
}

.status__ready {
    flex: 1;
    padding-left: 4px;
    border-left: 2px solid #999;
}

.status__cell {
    width: 36px;
    border-left: 1px solid #777;
    text-align: center;
}

.status__cell_narrow {
    width: 30px;
}

.zoom {
    display: flex;
    align-items: center;
    justify-content: flex-end;
    gap: 5px;
    width: 250px;
    padding-right: 4px;
    border-left: 1px solid #777;
}

.zoom__value {
    margin-right: 4px;
}

.zoom__range {
    appearance: none;
    width: 102px;
    height: 12px;
    background: linear-gradient(#555, #555) center / 100% 1px no-repeat;
}

.zoom__range::-webkit-slider-thumb {
    appearance: none;
    width: 3px;
    height: 12px;
    background-color: #333;
}
```
